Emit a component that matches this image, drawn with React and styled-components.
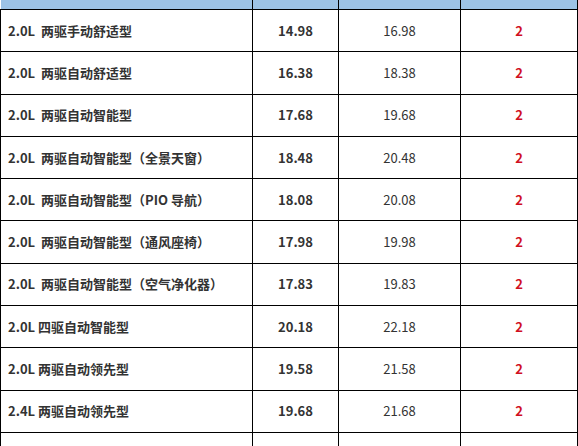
import React from "react";
import styled, { createGlobalStyle } from "styled-components";

const Global = createGlobalStyle`
  html, body {
    margin: 0;
    padding: 0;
    background: #ffffff;
    overflow: hidden;
  }
  body {
    font-family: "Noto Sans CJK SC", "Noto Sans", sans-serif;
  }
`;

const Table = styled.table`
  border-collapse: collapse;
  table-layout: fixed;
  width: 577px;
  font-size: 13px;
  color: #333333;
`;

const HeadCell = styled.th`
  height: 9px;
  padding: 0;
  background: #9dc3e6;
  border-left: 1px solid #000;
  border-right: 1px solid #000;
  border-bottom: 1px solid #000;
  &:first-child {
    border-left: none;
  }
`;

const Row = styled.tr`
  height: 42.3px;
`;

const Cell = styled.td`
  padding: 0;
  border: 1px solid #000;
  text-align: ${(p) => (p.$left ? "left" : "center")};
  padding-left: ${(p) => (p.$left ? "7px" : "0")};
  font-weight: ${(p) => (p.$bold ? 700 : 400)};
  color: ${(p) => (p.$faded ? "#f0f0f0" : p.$red ? "#d0101f" : "#333333")};
  white-space: pre;
  vertical-align: middle;
  line-height: 16px;
`;

const rows = [
  ["2.0L  两驱手动舒适型", "14.98", "16.98", "2"],
  ["2.0L  两驱自动舒适型", "16.38", "18.38", "2"],
  ["2.0L  两驱自动智能型", "17.68", "19.68", "2"],
  ["2.0L  两驱自动智能型（全景天窗）", "18.48", "20.48", "2"],
  ["2.0L  两驱自动智能型（PIO 导航）", "18.08", "20.08", "2"],
  ["2.0L  两驱自动智能型（通风座椅）", "17.98", "19.98", "2"],
  ["2.0L  两驱自动智能型（空气净化器）", "17.83", "19.83", "2"],
  ["2.0L 四驱自动智能型", "20.18", "22.18", "2"],
  ["2.0L 两驱自动领先型", "19.58", "21.58", "2"],
  ["2.4L 两驱自动领先型", "19.68", "21.68", "2"],
];

export default function App() {
  return (
    <>
      <Global />
      <Table>
        <colgroup>
          <col style={{ width: 252 }} />
          <col style={{ width: 86 }} />
          <col style={{ width: 122 }} />
          <col style={{ width: 117 }} />
        </colgroup>
        <thead>
          <tr>
            <HeadCell />
            <HeadCell />
            <HeadCell />
            <HeadCell />
          </tr>
        </thead>
        <tbody>
          {rows.map((r, i) => (
            <Row key={i}>
              <Cell $left $bold>{r[0]}</Cell>
              <Cell $bold>{r[1]}</Cell>
              <Cell>{r[2]}</Cell>
              <Cell $bold $red>{r[3]}</Cell>
            </Row>
          ))}
          <Row>
            <Cell $left $bold $faded>2.4L 四驱自动领先型（全景天窗）</Cell>
            <Cell $bold $faded>20.98</Cell>
            <Cell $faded>22.98</Cell>
            <Cell $bold $faded>2</Cell>
          </Row>
        </tbody>
      </Table>
    </>
  );
}
